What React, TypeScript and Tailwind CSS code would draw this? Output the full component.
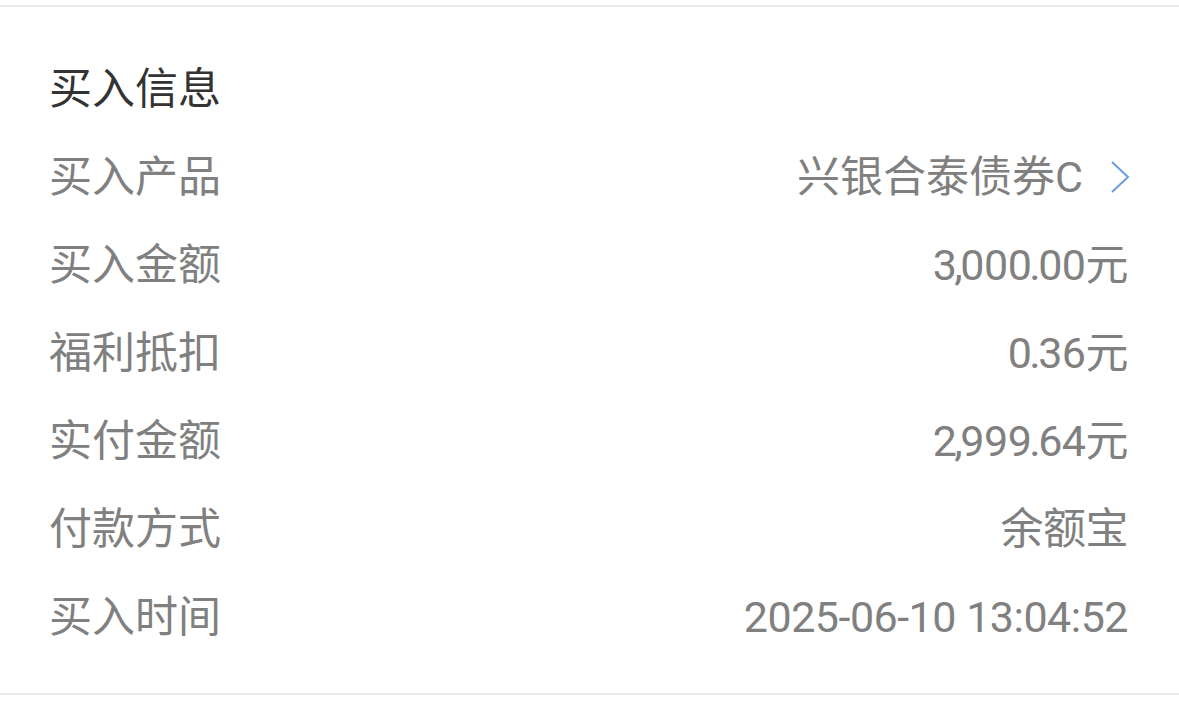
const rows: { label: string; value: string; link?: boolean }[] = [
  { label: '买入产品', value: '兴银合泰债券C', link: true },
  { label: '买入金额', value: '3,000.00元' },
  { label: '福利抵扣', value: '0.36元' },
  { label: '实付金额', value: '2,999.64元' },
  { label: '付款方式', value: '余额宝' },
  { label: '买入时间', value: '2025-06-10 13:04:52' },
]

function Value({ text }: { text: string }) {
  // commas and periods sit tighter in the reference
  return (
    <span className="tracking-[-0.5px]">
      {text.split('').map((c, i) =>
        c === ',' || c === '.' ? (
          <span key={i} className="-mx-[2px]">{c}</span>
        ) : (
          c
        )
      )}
    </span>
  )
}

export default function App() {
  return (
    <div
      className="w-[1179px] h-[717px] bg-white pt-[5px] overflow-hidden"
      style={{ fontFamily: "Roboto, 'Noto Sans CJK SC', sans-serif" }}
    >
      <div className="border-t-[2px] border-b-[2px] border-[#ececec] pt-[38px] pb-[32px] pl-[49px] pr-[51px]">
        <div className="h-[88px] flex items-center text-[43px] text-[#333333]">买入信息</div>
        {rows.map(r => (
          <div key={r.label} className="h-[88px] flex items-center justify-between text-[43px] text-[#808080]">
            <span>{r.label}</span>
            <span className="flex items-center">
              {r.link ? r.value : <Value text={r.value} />}
              {r.link && (
                <svg width="22" height="34" viewBox="0 0 22 34" className="ml-[26px] -mr-[3px]">
                  <path d="M3 2 L19 17 L3 32" fill="none" stroke="#6b9be0" strokeWidth="2" />
                </svg>
              )}
            </span>
          </div>
        ))}
      </div>
    </div>
  )
}
